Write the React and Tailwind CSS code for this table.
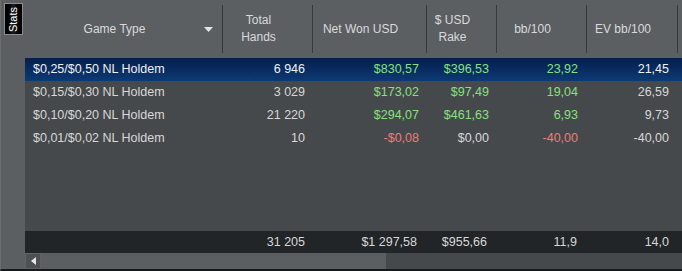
import React from 'react';

const cols = [
  { key: 'game', w: 'w-[198px]' },
  { key: 'hands', w: 'w-[90px]' },
  { key: 'net', w: 'w-[114px]' },
  { key: 'rake', w: 'w-[70px]' },
  { key: 'bb', w: 'w-[90px]' },
  { key: 'ev', w: 'w-[91px]' },
];

const rows = [
  { game: '$0,25/$0,50 NL Holdem', hands: '6 946', net: ['$830,57', 'g'], rake: ['$396,53', 'g'], bb: ['23,92', 'g'], ev: '21,45', sel: true },
  { game: '$0,15/$0,30 NL Holdem', hands: '3 029', net: ['$173,02', 'g'], rake: ['$97,49', 'g'], bb: ['19,04', 'g'], ev: '26,59' },
  { game: '$0,10/$0,20 NL Holdem', hands: '21 220', net: ['$294,07', 'g'], rake: ['$461,63', 'g'], bb: ['6,93', 'g'], ev: '9,73' },
  { game: '$0,01/$0,02 NL Holdem', hands: '10', net: ['-$0,08', 'r'], rake: ['$0,00', 'w'], bb: ['-40,00', 'r'], ev: '-40,00' },
];

const tone = {
  g: 'text-[#86e07f]',
  r: 'text-[#f07a78]',
  w: 'text-[#d6d7d8]',
};

function Sep() {
  return <div className="w-px h-[48px] bg-[#37393b] shrink-0" />;
}

function HeadCell({ w, children, arrow }) {
  return (
    <div className={`${w} h-full flex items-center shrink-0`}>
      <div className="flex-1 flex items-center justify-center pr-[18px] text-center leading-[17px]">
        {children}
      </div>
      {arrow && (
        <svg width="9" height="5" viewBox="0 0 9 5" className="mr-[9px] -ml-[18px]">
          <path d="M0 0h9L4.5 5z" fill="#e4e5e6" />
        </svg>
      )}
      <Sep />
    </div>
  );
}

export default function App() {
  return (
    <div
      className="w-[682px] h-[271px] bg-[#5b5f62] flex border-b-2 border-[#17191a] border-l border-l-[#6a6e71] overflow-hidden"
      style={{ fontFamily: '"Liberation Sans", Arial, sans-serif' }}
    >
      <div className="w-[24px] shrink-0 pt-[3px] pl-[3px]">
        <div className="w-[19px] h-[32px] border border-[#8a8d90] bg-gradient-to-r from-[#000] via-[#1c1c1c] to-[#000] flex items-center justify-center">
          <span className="block -rotate-90 text-white text-[11px] leading-none">Stats</span>
        </div>
      </div>

      <div className="flex-1 flex flex-col min-w-0">
        {/* header */}
        <div className="h-[58px] flex text-[12px] text-[#d9dadb] shrink-0">
          <HeadCell w={cols[0].w} arrow>Game Type</HeadCell>
          <HeadCell w={cols[1].w}><span>Total<br />Hands</span></HeadCell>
          <HeadCell w={cols[2].w}>Net Won USD</HeadCell>
          <HeadCell w={cols[3].w}><span>$ USD<br />Rake</span></HeadCell>
          <HeadCell w={cols[4].w}>bb/100</HeadCell>
          <HeadCell w={cols[5].w}>EV bb/100</HeadCell>
        </div>

        {/* body */}
        <div className="flex-1 bg-[#46494c] text-[12.5px]">
          {rows.map((r, i) => (
            <div
              key={i}
              className={`h-[23px] flex items-center ${r.sel ? 'bg-gradient-to-b from-[#061e4d] to-[#0d3a74] text-[#eef0f2]' : 'text-[#d6d7d8]'}`}
            >
              <div className={`${cols[0].w} pl-[8px] shrink-0`}>{r.game}</div>
              <div className={`${cols[1].w} pr-[8px] text-right shrink-0`}>{r.hands}</div>
              <div className={`${cols[2].w} pr-[8px] text-right shrink-0 ${tone[r.net[1]]}`}>{r.net[0]}</div>
              <div className={`${cols[3].w} pr-[8px] text-right shrink-0 ${tone[r.rake[1]]}`}>{r.rake[0]}</div>
              <div className={`${cols[4].w} pr-[9px] text-right shrink-0 ${tone[r.bb[1]]}`}>{r.bb[0]}</div>
              <div className={`${cols[5].w} pr-[9px] text-right shrink-0`}>{r.ev}</div>
            </div>
          ))}
        </div>

        {/* totals */}
        <div className="h-[22px] bg-[#222527] flex items-center text-[12.5px] text-[#d6d7d8] shrink-0">
          <div className={`${cols[0].w} shrink-0`} />
          <div className={`${cols[1].w} pr-[8px] text-right shrink-0`}>31 205</div>
          <div className={`${cols[2].w} pr-[10px] text-right shrink-0`}>$1 297,58</div>
          <div className={`${cols[3].w} pr-[10px] text-right shrink-0`}>$955,66</div>
          <div className={`${cols[4].w} pr-[10px] text-right shrink-0`}>11,9</div>
          <div className={`${cols[5].w} pr-[9px] text-right shrink-0`}>14,0</div>
        </div>

        {/* scrollbar */}
        <div className="h-[16px] bg-[#46494c] flex shrink-0">
          <div className="w-[16px] h-full bg-[#4e5154] border border-[#5f6366] flex items-center justify-center">
            <svg width="5" height="8" viewBox="0 0 5 8">
              <path d="M5 0v8L0 4z" fill="#e6e7e8" />
            </svg>
          </div>
          <div className="w-[345px] h-full bg-[#5b5f62]" />
        </div>
      </div>
    </div>
  );
}
